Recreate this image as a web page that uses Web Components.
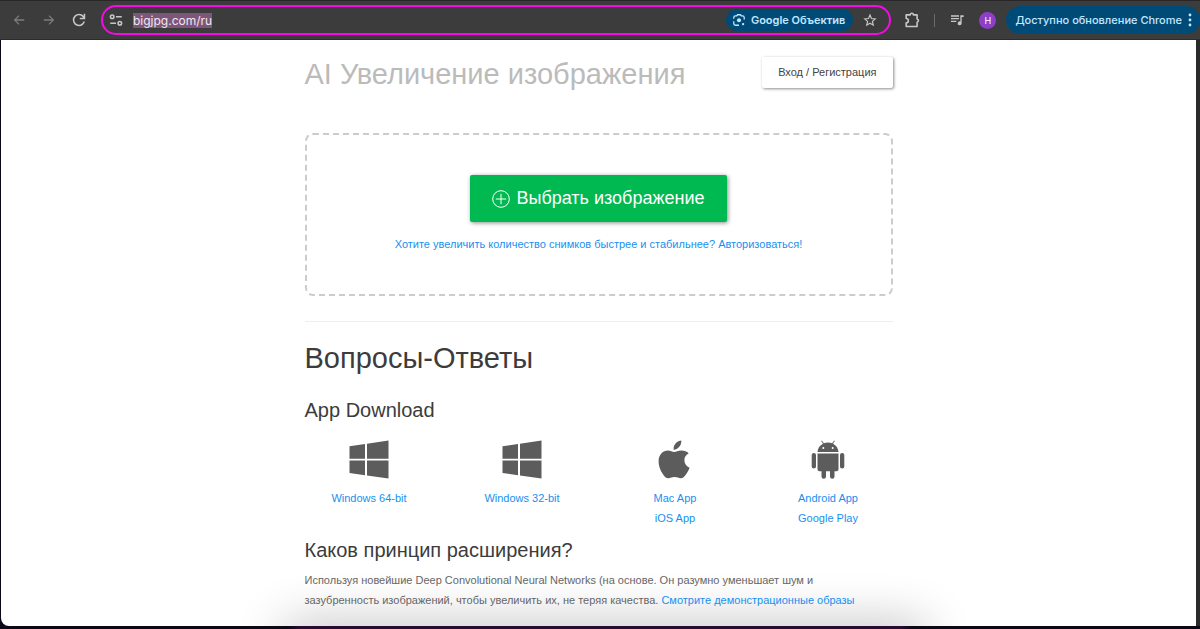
<!DOCTYPE html>
<html lang="ru">
<head>
<meta charset="utf-8">
<meta name="viewport" content="width=device-width, initial-scale=1">
<title>Bigjpg</title>
<style>
    html, body {
        margin: 0;
        background-color: #0c0616;
    }
    body {
        font-family: "Liberation Sans", Arial, sans-serif;
        font-size: 11px;
    }
</style>
</head>
<body>
<browser-window>
    <browser-toolbar slot="toolbar"></browser-toolbar>
    <site-header heading="AI Увеличение изображения"></site-header>
    <upload-box></upload-box>
    <faq-section heading="Вопросы-Ответы">
        <faq-item heading="App Download">
            <app-list>
                <app-entry icon="windows" links="Windows 64-bit"></app-entry>
                <app-entry icon="windows" links="Windows 32-bit"></app-entry>
                <app-entry icon="apple" links="Mac App|iOS App"></app-entry>
                <app-entry icon="android" links="Android App|Google Play"></app-entry>
            </app-list>
        </faq-item>
        <faq-item heading="Каков принцип расширения?">
            <faq-answer></faq-answer>
        </faq-item>
    </faq-section>
</browser-window>
<script>
    const icons = {
        back: { box: "0 0 24 24", body: `<path d="M21 12H5M12 4.500 4.500 12l7.500 7.500" fill="none" stroke="currentColor" stroke-width="2.200"/>` },
        forward: { box: "0 0 24 24", body: `<path d="M3 12h16M12 4.500 19.500 12 12 19.500" fill="none" stroke="currentColor" stroke-width="2.200"/>` },
        reload: { box: "3 3 18 18", body: `<path d="M12 20q-3.350 0-5.675-2.325T4 12t2.325-5.675T12 4q1.725 0 3.300.712T18 6.750V4h2v7h-7V9h4.200q-.8-1.400-2.187-2.200T12 6Q9.500 6 7.750 7.750T6 12t1.750 4.250T12 18q1.925 0 3.475-1.100T17.650 14h2.100q-.7 2.650-2.850 4.325T12 20" fill="currentColor"/>` },
        tune: { box: "1 1 22 22", body: `<g fill="none" stroke="currentColor" stroke-width="2.400"><circle cx="6" cy="7" r="2.800"/><path d="M12 7h9M3 17h9"/><circle cx="18" cy="17" r="2.800"/></g>` },
        lens: { box: "0 0 24 24", body: `<g fill="none" stroke="currentColor" stroke-width="2.200"><path d="M3 10V8q0-3 3-3h2l1.500-2h5L16 5h2q3 0 3 3v3M3 14v4q0 3 3 3h6"/></g><circle cx="12" cy="12.500" r="3.500" fill="currentColor"/><circle cx="19" cy="19" r="2" fill="currentColor"/>` },
        star: { box: "0 0 24 24", body: `<path d="m12 3.500 2.500 6 6.500.6-4.900 4.300 1.500 6.400L12 17.400l-5.600 3.400 1.500-6.400L3 10.100l6.500-.6z" fill="none" stroke="currentColor" stroke-width="2"/>` },
        puzzle: { box: "1 1 22 22", body: `<path d="M4 5h5.500a2.200 2.200 0 0 1 4.500 0H19v5.500a2.300 2.300 0 0 1 0 4.500v6H4v-5a3 3 0 0 0 0-6z" fill="none" stroke="currentColor" stroke-width="2.200" stroke-linejoin="round"/>` },
        queue: { box: "0 0 24 24", body: `<path d="M3 5h12v2H3zM3 9h12v2H3zM3 13h8v2H3z" fill="currentColor"/><path d="M17 5h5v2.500h-3V17a3 3 0 1 1-2-2.800z" fill="currentColor"/>` },
        dots: { box: "0 0 4 16", body: `<g fill="currentColor"><circle cx="2" cy="3" r="1.400"/><circle cx="2" cy="8" r="1.400"/><circle cx="2" cy="13" r="1.400"/></g>` },
        plus: { box: "0 0 18 18", body: `<g fill="none" stroke="currentColor" stroke-width="1"><circle cx="9" cy="9" r="8.300"/><path d="M9 3.800v10.400M3.800 9h10.400"/></g>` },
        windows: { box: "0 0 40 40", body: `<path d="M.5 6.200 16 4v14.700H.5zM18 3.700 39.500.5v18.200H18zM.5 20.500H16v14.800L.5 33zM18 20.500h21.500v18L18 35.400z" fill="currentColor"/>` },
        apple: { box: "0 0 40 40", body: `<path d="M26.300.4c.3 3-1 5.300-2.500 6.900-1.500 1.700-3.300 2.600-5.200 2.400-.3-2.800 1-5 2.400-6.600C22.300 1.500 24.500.5 26.300.4zM33.700 13.300c-2.900 1.700-4.300 3.900-4.300 6.900 0 3.500 2.100 6.300 5.200 7.500-.9 2.600-2.200 4.700-3.700 6.700-1.500 2-3 3.900-5.200 3.900-2.200.1-3.100-1.200-6.100-1.200-2.900 0-3.900 1.200-6.100 1.200-2.300.1-3.900-1.800-5.400-3.900-3-4.200-4.700-8.900-4.500-13.700.3-6.300 4.500-10 9.200-10.100 2.600 0 4.700 1.500 6.400 1.500s4.300-1.800 7.400-1.600c2.800.2 5.200.9 7.100 2.800z" fill="currentColor"/>` },
        android: { box: "0 0 40 40", body: `<g fill="currentColor"><path d="M9.500 12c.2-3.800 2.300-6.700 5.500-8.300L13.200.9l.7-.5L15.800 3.300a12 12 0 0 1 8.400 0L26.100.4l.7.5L25 3.700c3.200 1.600 5.300 4.500 5.500 8.300zM9.500 13.500h21v15.700a2 2 0 0 1-2 2h-2v5.300a2.200 2.200 0 0 1-4.500 0v-5.300h-4v5.300a2.200 2.200 0 0 1-4.500 0v-5.300h-2a2 2 0 0 1-2-2z"/><rect x="3.700" y="13" width="4.300" height="15.500" rx="2.100"/><rect x="32" y="13" width="4.300" height="15.500" rx="2.100"/></g><circle cx="15.300" cy="8" r="1" fill="#fff"/><circle cx="24.700" cy="8" r="1" fill="#fff"/>` }
    };

    // registers an element that renders html(el) into an open shadow root
    function define(name, html) {
        window.customElements.define(name, class extends HTMLElement {
            connectedCallback() {
                if (this.shadowRoot) return;
                const template = document.createElement("template");
                template.innerHTML = html(this);
                this.attachShadow({ mode: "open" }).appendChild(template.content.cloneNode(true));
            }
        });
    }

    define("ui-icon", (el) => {
        const icon = icons[el.getAttribute("name")];
        return `
            <style>
                :host {
                    display: block;
                    flex: none;
                    width: var(--icon-size, 14px);
                    height: var(--icon-size, 14px);
                }
                svg {
                    display: block;
                    width: 100%;
                    height: 100%;
                }
            </style>
            <svg viewBox="${icon.box}" aria-hidden="true">${icon.body}</svg>
        `;
    });

    define("browser-window", () => `
        <style>
            :host {
                display: flex;
                flex-direction: column;
                min-height: 100vh;
            }
            .frame {
                flex: 1;
                display: flex;
                padding: 0 4px 3px 1px;
                background: linear-gradient(to right, transparent 50%, #2a2a2a 50%) top / 100% calc(100% - 3px) no-repeat, linear-gradient(to right, #0c0818, #0c0818 24%, #2a0a35 25%, #2a0a35 75%, #0c0818 76%);
            }
            .page {
                flex: 1;
                position: relative;
                isolation: isolate;
                overflow: hidden;
                background-color: #ffffff;
                border-radius: 0 0 0 8px;
            }
            /* soft glow along the bottom edge */
            .page::after {
                content: "";
                position: absolute;
                z-index: -1;
                left: 24%;
                right: 23%;
                bottom: -32px;
                height: 32px;
                box-shadow: 0 0 48px 4px rgba(0, 0, 0, 0.24);
            }
            main {
                max-width: 588px;
                margin: 0 auto;
                padding: 16px 16px 0;
            }
        </style>
        <slot name="toolbar"></slot>
        <div class="frame">
            <div class="page">
                <main><slot></slot></main>
            </div>
        </div>
    `);

    define("browser-toolbar", () => `
        <style>
            :host {
                display: flex;
                align-items: center;
                box-sizing: border-box;
                height: 40px;
                padding-left: 12px;
                background-color: #3c3c3c;
                border-top: 1px solid #27272a;
                border-bottom: 1px solid #2c2c2c;
                color: #c7c7c7;
                font-family: Inter, Roboto, sans-serif;
                font-size: 11px;
            }
            button {
                display: flex;
                align-items: center;
                padding: 0;
                border: none;
                background: none;
                color: inherit;
                font: inherit;
                cursor: pointer;
            }
            nav {
                display: flex;
                gap: 16px;
                margin-right: 15px;
            }
            nav button:disabled {
                color: #7c7c7c;
            }
            .address {
                flex: 1;
                display: flex;
                align-items: center;
                box-sizing: border-box;
                height: 30px;
                padding: 0 12px 0 6px;
                border: 2px solid #f60be6;
                border-radius: 15px;
            }
            input {
                field-sizing: content;
                height: 15px;
                margin-left: 10px;
                padding: 0;
                border: none;
                outline: none;
                background-color: #7d5679;
                color: #f0e8f0;
                font: 12px/15px Inter, Roboto, sans-serif;
            }
            .lens {
                gap: 5px;
                height: 22px;
                margin-left: auto;
                padding: 0 8px 0 6px;
                border-radius: 11px;
                background-color: #004a77;
                color: #c2e7ff;
                font-weight: 600;
                white-space: nowrap;
            }
            .star {
                margin-left: 10px;
            }
            .tools {
                --icon-size: 16px;
                display: flex;
                align-items: center;
                gap: 14px;
                margin: 0 10px 0 13px;
            }
            .line {
                width: 1px;
                height: 13px;
                background-color: #6a6a6a;
            }
            .avatar {
                justify-content: center;
                width: 17px;
                height: 17px;
                border-radius: 50%;
                background-color: #8d3fc7;
                color: #ffffff;
                font-size: 9px;
            }
            .update {
                --icon-size: 16px;
                height: 28px;
                padding: 0 2px 0 9px;
                border-radius: 14px;
                background-color: #004a77;
                color: #c2e7ff;
                font-weight: 500;
                white-space: nowrap;
            }
        </style>
        <nav>
            <button type="button" aria-label="Назад" disabled><ui-icon name="back"></ui-icon></button>
            <button type="button" aria-label="Вперёд" disabled><ui-icon name="forward"></ui-icon></button>
            <button type="button" aria-label="Обновить"><ui-icon name="reload"></ui-icon></button>
        </nav>
        <div class="address">
            <ui-icon name="tune"></ui-icon>
            <input type="text" value="bigjpg.com/ru" aria-label="Адресная строка" spellcheck="false">
            <button type="button" class="lens"><ui-icon name="lens"></ui-icon>Google Объектив</button>
            <button type="button" class="star" aria-label="В закладки"><ui-icon name="star"></ui-icon></button>
        </div>
        <div class="tools">
            <button type="button" aria-label="Расширения"><ui-icon name="puzzle"></ui-icon></button>
            <span class="line"></span>
            <button type="button" aria-label="Медиа"><ui-icon name="queue"></ui-icon></button>
            <button type="button" class="avatar">H</button>
        </div>
        <button type="button" class="update">Доступно обновление Chrome<ui-icon name="dots"></ui-icon></button>
    `);

    define("site-header", (el) => `
        <style>
            :host {
                display: flex;
                justify-content: space-between;
                align-items: center;
                height: 32px;
                margin-bottom: 45px;
            }
            h1 {
                margin: 4px 0 0;
                color: #bbbbbb;
                font-size: 29px;
                font-weight: 400;
                line-height: 32px;
                white-space: nowrap;
            }
            button {
                height: 31px;
                padding: 0 16px;
                border: none;
                border-radius: 2px;
                background-color: #ffffff;
                box-shadow: 1px 1px 3px rgba(0, 0, 0, 0.45);
                color: #444444;
                font: inherit;
                white-space: nowrap;
                cursor: pointer;
            }
        </style>
        <h1>${el.getAttribute("heading")}</h1>
        <button type="button">Вход / Регистрация</button>
    `);

    define("upload-box", () => `
        <style>
            :host {
                display: flex;
                flex-direction: column;
                align-items: center;
                gap: 12px;
                padding: 40px 16px;
                border: 2px dashed #cccccc;
                border-radius: 8px;
            }
            button {
                --icon-size: 18px;
                display: flex;
                align-items: center;
                gap: 6px;
                height: 47px;
                padding: 0 22px;
                border: none;
                border-radius: 2px;
                background-color: #00b951;
                box-shadow: 1px 1px 4px rgba(0, 0, 0, 0.45);
                color: #ffffff;
                font: inherit;
                font-size: 18px;
                white-space: nowrap;
                cursor: pointer;
            }
            a {
                color: #1890f0;
                line-height: 20px;
                text-decoration: none;
            }
        </style>
        <button type="button"><ui-icon name="plus"></ui-icon>Выбрать изображение</button>
        <a href="#login">Хотите увеличить количество снимков быстрее и стабильнее? Авторизоваться!</a>
    `);

    define("faq-section", (el) => `
        <style>
            :host {
                display: block;
                margin-top: 25px;
                border-top: 1px solid #eeeeee;
            }
            h2 {
                margin: 20px 0 24px;
                color: #3c3c3c;
                font-size: 29px;
                font-weight: 400;
                line-height: 32px;
            }
        </style>
        <h2>${el.getAttribute("heading")}</h2>
        <slot></slot>
    `);

    define("faq-item", (el) => `
        <style>
            :host {
                display: block;
            }
            h3 {
                margin: 0 0 8px;
                color: #3c3c3c;
                font-size: 20px;
                font-weight: 400;
                line-height: 24px;
            }
        </style>
        <h3>${el.getAttribute("heading")}</h3>
        <slot></slot>
    `);

    define("app-list", () => `
        <style>
            :host {
                display: grid;
                grid-template-columns: repeat(4, 1fr);
                margin: 0 -12px;
                padding: 10px 0;
            }
        </style>
        <slot></slot>
    `);

    define("app-entry", (el) => `
        <style>
            :host {
                --icon-size: 40px;
                display: flex;
                flex-direction: column;
                align-items: center;
                color: #5c5c5c;
            }
            ui-icon {
                margin-bottom: 8px;
            }
            a {
                color: #1890f0;
                line-height: 20px;
                text-decoration: none;
            }
        </style>
        <ui-icon name="${el.getAttribute("icon")}"></ui-icon>
        ${el.getAttribute("links").split("|").map((text) => `<a href="#download">${text}</a>`).join("")}
    `);

    define("faq-answer", () => `
        <style>
            :host {
                display: block;
                color: #666666;
                line-height: 20px;
            }
            p {
                margin: 0;
            }
            a {
                color: #1890f0;
                text-decoration: none;
            }
        </style>
        <p>Используя новейшие Deep Convolutional Neural Networks (на основе. Он разумно уменьшает шум и<br>зазубренность изображений, чтобы увеличить их, не теряя качества. <a href="#samples">Смотрите демонстрационные образы</a></p>
    `);
</script>
</body>
</html>
